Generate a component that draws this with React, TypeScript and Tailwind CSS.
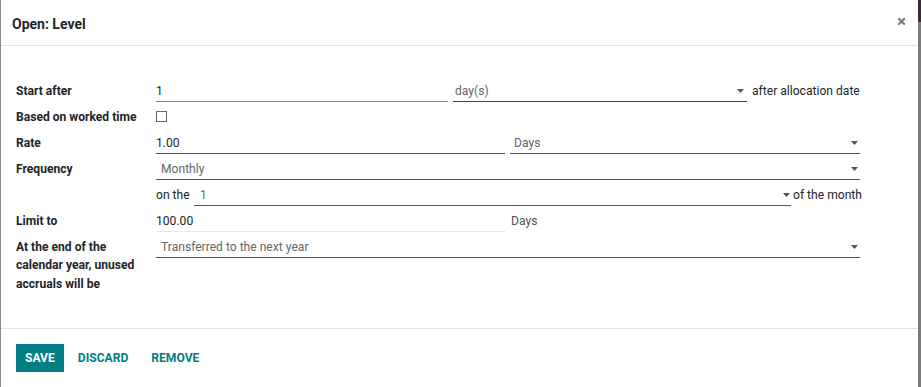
import React from "react";

const Caret = () => (
  <svg width="7" height="4" viewBox="0 0 7 4" className="shrink-0">
    <path d="M0 0 L7 0 L3.5 4 Z" fill="#555" />
  </svg>
);

const Label = ({ children }: { children: React.ReactNode }) => (
  <div className="w-[140px] shrink-0 pt-[5px] leading-[20px] font-bold text-[#212529]">{children}</div>
);

export default function App() {
  return (
    <div
      className="flex w-[921px] h-[387px] bg-[#7b7b7b] text-[12.1px] text-[#212529]"
      style={{ fontFamily: "Roboto, 'Liberation Sans', sans-serif" }}
    >
      <div className="w-[1px] bg-[#8a8a8a]" />
      <div className="w-[917px] bg-white flex flex-col">
        {/* Header */}
        <div className="h-[46px] border-b border-[#dee2e6] flex items-center justify-between pl-[11px] pr-[12px]">
          <div className="text-[14px] font-bold text-[#212529] pt-[3px]">Open: Level</div>
          <div className="text-[17px] font-bold leading-none text-[#777] pb-[2px]">×</div>
        </div>
        {/* Body */}
        <div className="flex-1 pt-[30px] pl-[15px] flex flex-col">
          {/* Start after */}
          <div className="flex h-[26px]">
            <Label>Start after</Label>
            <div className="w-[292px] h-[26px] border-b border-[#4ea3a6] pt-[5px] leading-[20px] text-[#212529]">1</div>
            <div className="ml-[5px] w-[294px] h-[26px] border-b border-[#444] pt-[5px] leading-[20px] pl-[2px] pr-[3px] flex items-start justify-between text-[#666]">
              <span>day(s)</span>
              <span className="pt-[8px]"><Caret /></span>
            </div>
            <div className="ml-[5px] pt-[5px] leading-[20px] text-[#212529]">after allocation date</div>
          </div>
          {/* Based on worked time */}
          <div className="flex h-[26px]">
            <Label>Based on worked time</Label>
            <div className="pt-[9px]">
              <div className="w-[11px] h-[11px] border border-[#666] bg-white" />
            </div>
          </div>
          {/* Rate */}
          <div className="flex h-[26px]">
            <Label>Rate</Label>
            <div className="w-[349px] h-[26px] border-b border-[#555] pt-[5px] leading-[20px] text-[#212529]">1.00</div>
            <div className="ml-[5px] w-[350px] h-[26px] border-b border-[#555] pt-[5px] leading-[20px] pl-[4px] pr-[2px] flex items-start justify-between text-[#666]">
              <span>Days</span>
              <span className="pt-[8px]"><Caret /></span>
            </div>
          </div>
          {/* Frequency */}
          <div className="flex h-[26px]">
            <Label>Frequency</Label>
            <div className="w-[704px] h-[26px] border-b border-[#555] pt-[5px] leading-[20px] pl-[5px] pr-[2px] flex items-start justify-between text-[#666]">
              <span>Monthly</span>
              <span className="pt-[8px]"><Caret /></span>
            </div>
          </div>
          {/* on the */}
          <div className="flex h-[26px]">
            <div className="w-[140px] shrink-0" />
            <div className="pt-[5px] leading-[20px] text-[#212529] w-[38px]">on the</div>
            <div className="w-[597px] h-[26px] border-b border-[#555] pt-[5px] leading-[20px] pl-[6px] pr-[1px] flex items-start justify-between text-[#666]">
              <span>1</span>
              <span className="pt-[8px]"><Caret /></span>
            </div>
            <div className="ml-[2px] pt-[5px] leading-[20px] text-[#212529]">of the month</div>
          </div>
          {/* Limit to */}
          <div className="flex h-[26px]">
            <Label>Limit to</Label>
            <div className="w-[349px] h-[26px] border-b border-[#e3e6e8] pt-[5px] leading-[20px] text-[#212529]">100.00</div>
            <div className="ml-[6px] pt-[5px] leading-[20px] text-[#555]">Days</div>
          </div>
          {/* At the end */}
          <div className="flex">
            <div className="w-[140px] shrink-0 pt-[5.5px] leading-[18.5px] font-bold text-[#212529]">
              At the end of the
              <br />
              calendar year, unused
              <br />
              accruals will be
            </div>
            <div className="w-[704px] h-[26px] border-b border-[#555] pt-[5px] leading-[20px] pl-[5px] pr-[2px] flex items-start justify-between text-[#666]">
              <span>Transferred to the next year</span>
              <span className="pt-[8px]"><Caret /></span>
            </div>
          </div>
        </div>
        {/* Footer */}
        <div className="h-[59px] border-t border-[#dee2e6] flex items-start pt-[15px] pl-[15px]">
          <div className="h-[28px] px-[9px] bg-[#017e84] text-white font-bold flex items-center uppercase">SAVE</div>
          <div className="h-[28px] ml-[5px] px-[9px] text-[#017e84] font-bold flex items-center">DISCARD</div>
          <div className="h-[28px] ml-[5px] px-[9px] text-[#017e84] font-bold flex items-center">REMOVE</div>
        </div>
      </div>
      <div className="flex-1 flex flex-col">
        <div className="h-[22px] bg-[#3a2a3a]" />
        <div className="flex-1 bg-[#7b7b7b]" />
      </div>
    </div>
  );
}
